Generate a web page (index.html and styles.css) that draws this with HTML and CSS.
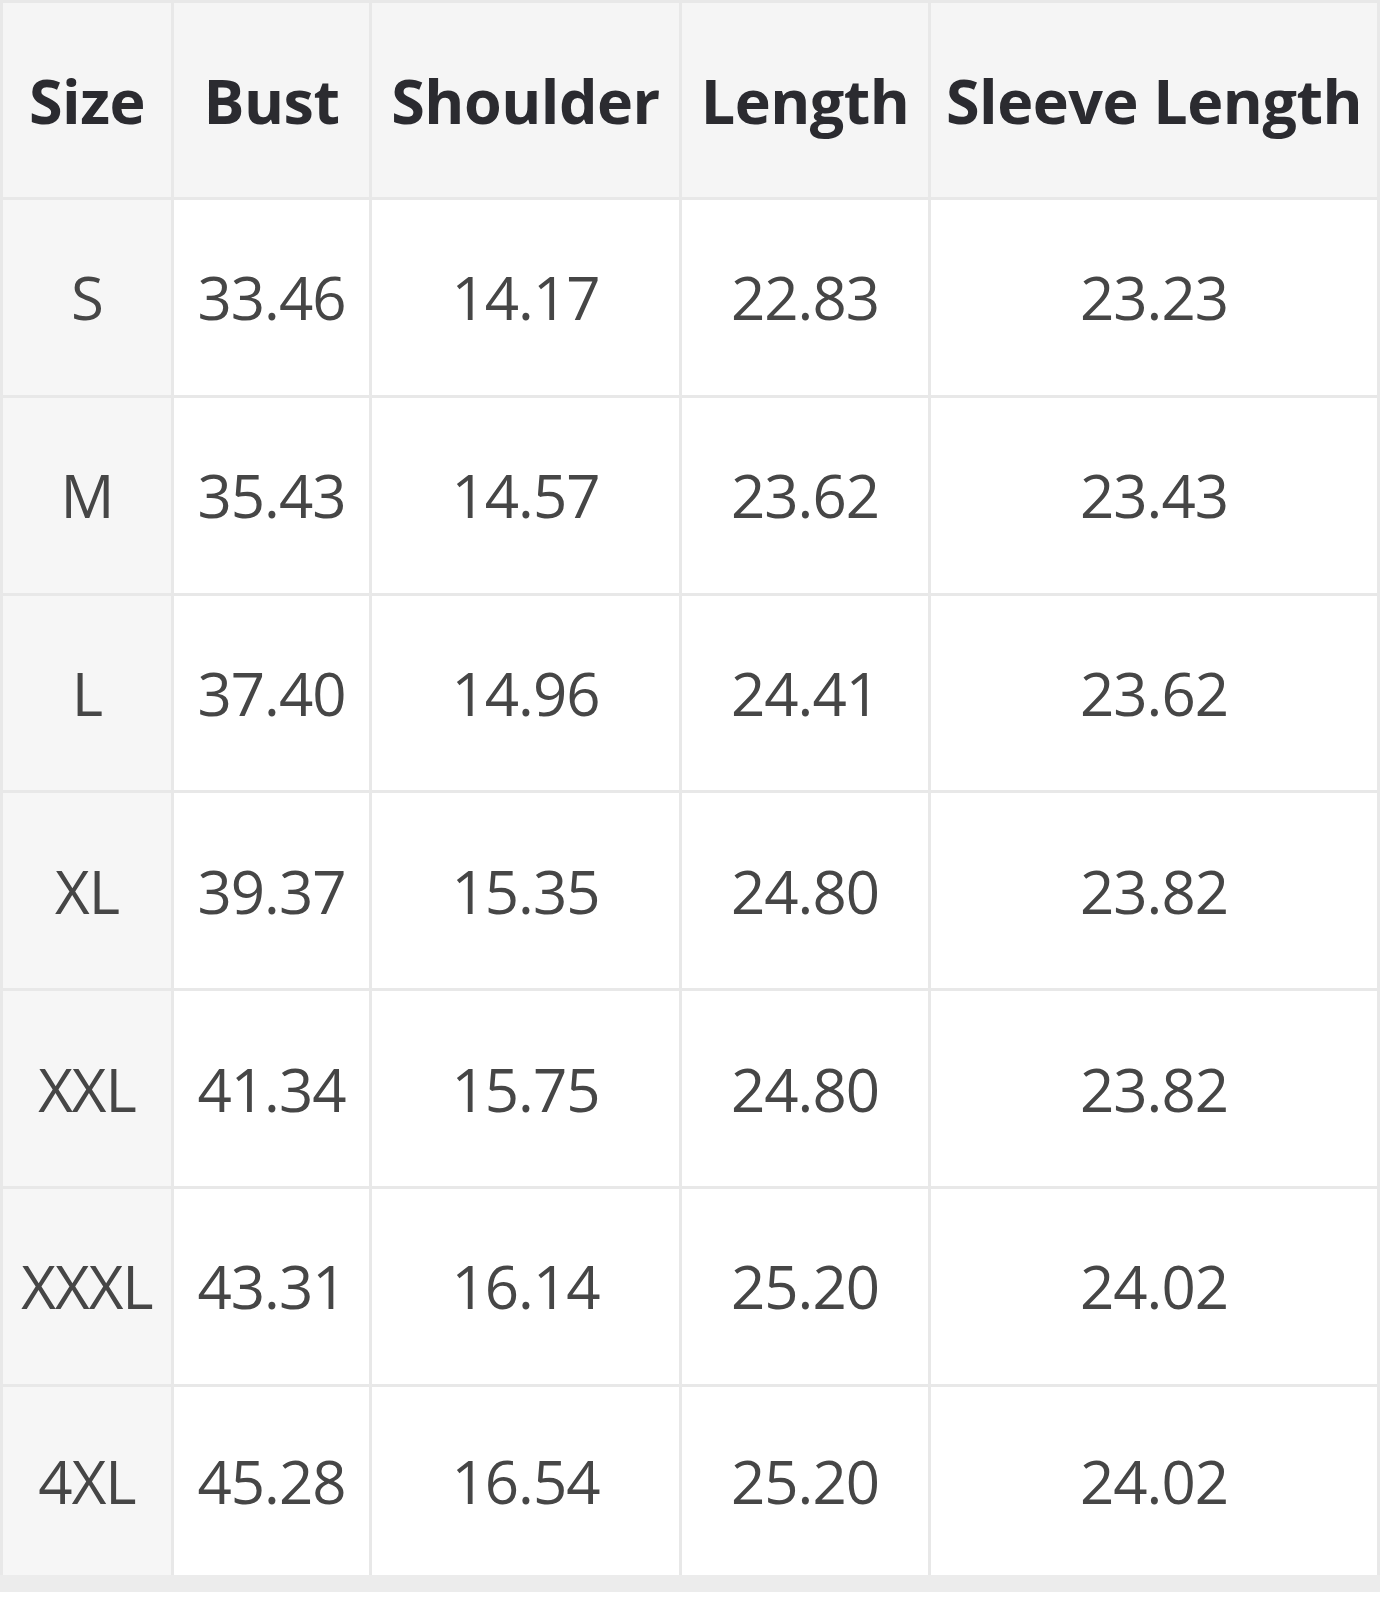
FILE: index.html
```html
<!DOCTYPE html>
<html lang="en">
<head>
<meta charset="utf-8">
<title>Size Chart</title>
<link rel="stylesheet" href="styles.css">
</head>
<body>
<table class="size-chart">
  <colgroup>
    <col class="c-size">
    <col class="c-bust">
    <col class="c-shoulder">
    <col class="c-length">
    <col class="c-sleeve">
  </colgroup>
  <thead>
    <tr>
      <th>Size</th>
      <th>Bust</th>
      <th>Shoulder</th>
      <th>Length</th>
      <th>Sleeve Length</th>
    </tr>
  </thead>
  <tbody>
    <tr><td class="size">S</td><td>33.46</td><td>14.17</td><td>22.83</td><td>23.23</td></tr>
    <tr><td class="size">M</td><td>35.43</td><td>14.57</td><td>23.62</td><td>23.43</td></tr>
    <tr><td class="size">L</td><td>37.40</td><td>14.96</td><td>24.41</td><td>23.62</td></tr>
    <tr><td class="size">XL</td><td>39.37</td><td>15.35</td><td>24.80</td><td>23.82</td></tr>
    <tr><td class="size">XXL</td><td>41.34</td><td>15.75</td><td>24.80</td><td>23.82</td></tr>
    <tr><td class="size">XXXL</td><td>43.31</td><td>16.14</td><td>25.20</td><td>24.02</td></tr>
    <tr><td class="size">4XL</td><td>45.28</td><td>16.54</td><td>25.20</td><td>24.02</td></tr>
  </tbody>
</table>
</body>
</html>
```

FILE: styles.css
```css
html, body {
  margin: 0;
  padding: 0;
  background: #ffffff;
}

.size-chart {
  border-collapse: collapse;
  table-layout: fixed;
  width: 1380px;
  font-family: "Open Sans", "DejaVu Sans", sans-serif;
  color: #464646;
  border-top: 3px solid #ebebeb;
  border-left: 3px solid #ebebeb;
  border-right: 3px solid #e6e6e6;
  border-bottom: 17px solid #ececec;
}

.c-size { width: 171px; }
.c-bust { width: 198px; }
.c-shoulder { width: 310px; }
.c-length { width: 249px; }
.c-sleeve { width: auto; }

.size-chart th,
.size-chart td {
  border: 3px solid #e8e8e8;
  text-align: center;
  vertical-align: middle;
  padding: 0;
  white-space: nowrap;
}

.size-chart thead tr {
  height: 197px;
}

.size-chart tbody tr {
  height: 197.8px;
}

.size-chart th {
  background: #f5f5f5;
  font-weight: 700;
  font-size: 61px;
  color: #2b2b30;
  letter-spacing: -0.5px;
}

.size-chart td {
  background: #ffffff;
  font-weight: 400;
  font-size: 60px;
  letter-spacing: -1px;
}

.size-chart td.size {
  background: #f6f6f6;
}
```
